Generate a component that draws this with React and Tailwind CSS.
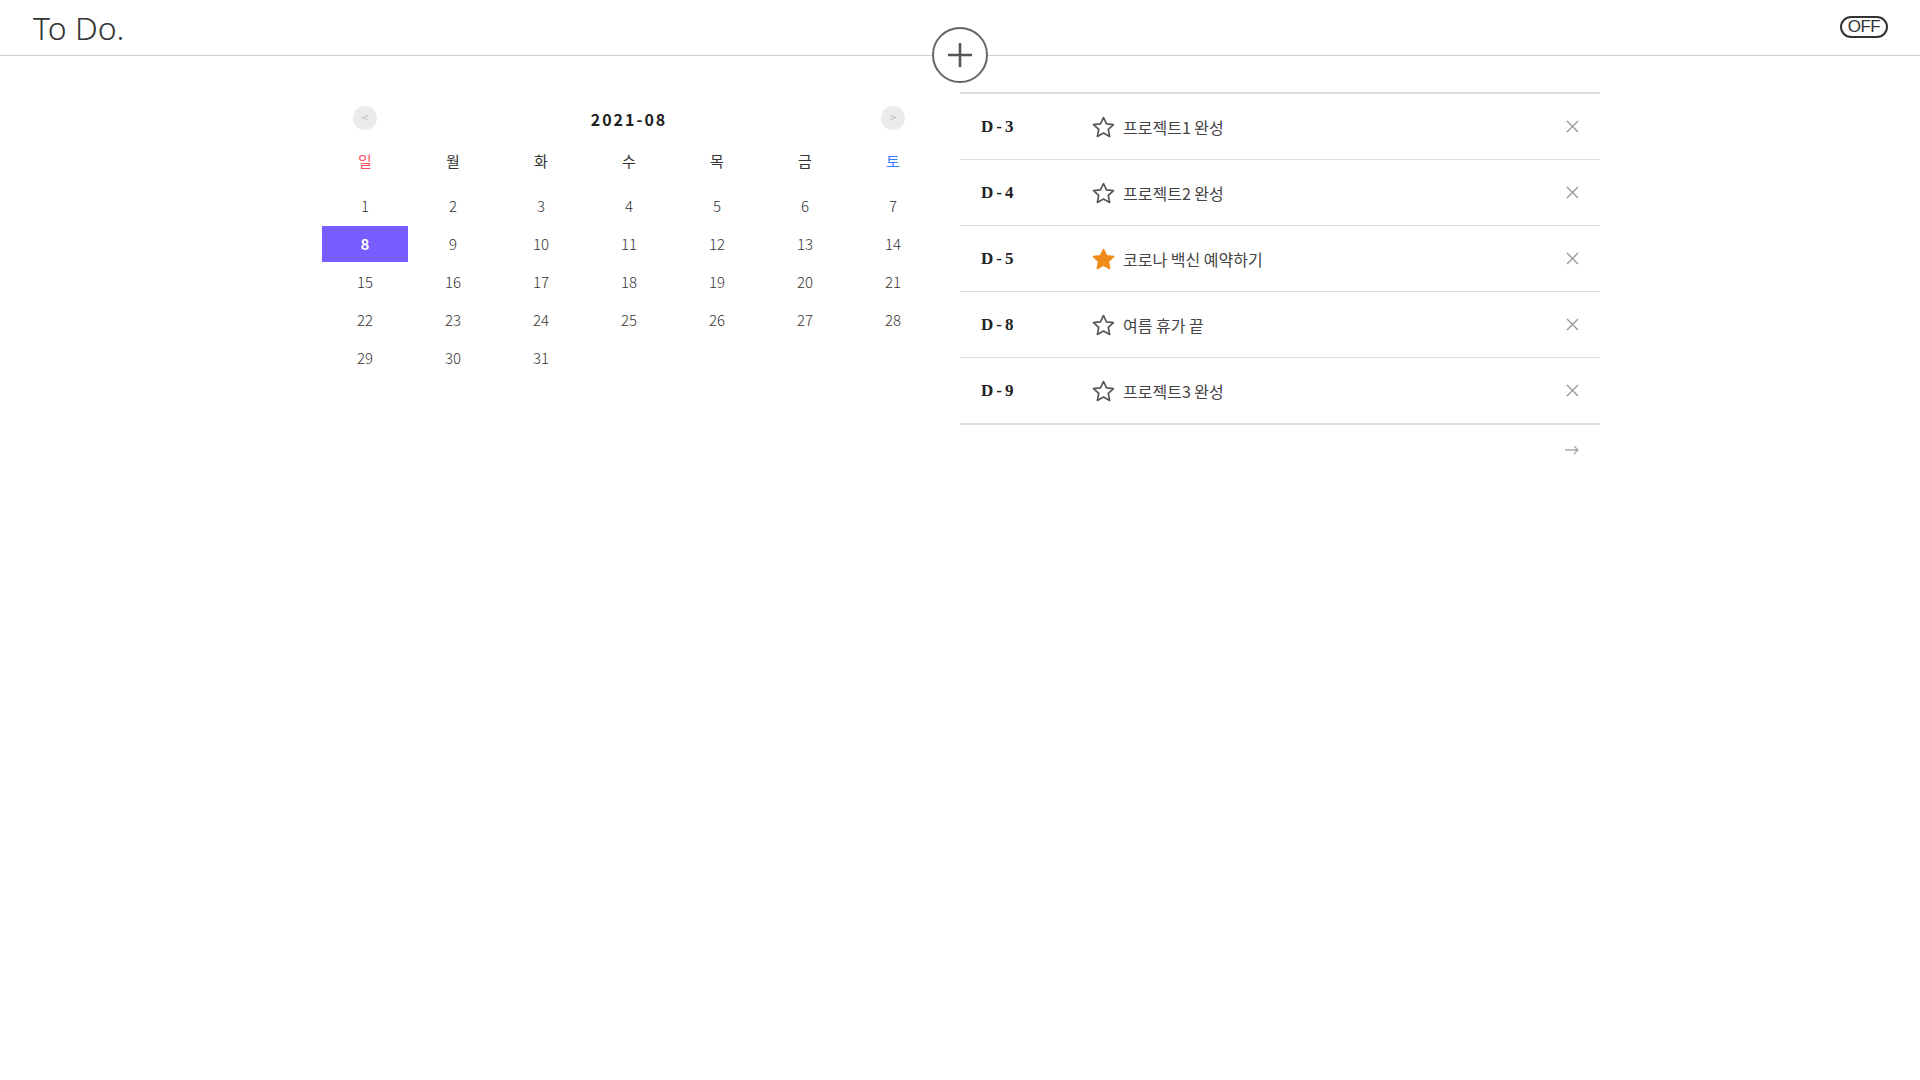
import { useState } from "react";

const KR = { fontFamily: '"Noto Sans CJK KR", "Noto Sans", sans-serif' };

const todos = [
  { d: 3, title: "프로젝트1 완성", star: false },
  { d: 4, title: "프로젝트2 완성", star: false },
  { d: 5, title: "코로나 백신 예약하기", star: true },
  { d: 8, title: "여름 휴가 끝", star: false },
  { d: 9, title: "프로젝트3 완성", star: false },
];

const weekdays = ["일", "월", "화", "수", "목", "금", "토"];

function Star({ filled }) {
  return (
    <svg width="25" height="25" viewBox="0 0 24 24">
      <path
        d="M12 2.4l2.9 6.1 6.7.8-5 4.6 1.3 6.7L12 17.3l-5.9 3.3 1.3-6.7-5-4.6 6.7-.8z"
        fill={filled ? "#f08c1c" : "none"}
        stroke={filled ? "#f08c1c" : "#555"}
        strokeWidth="1.6"
        strokeLinejoin="round"
      />
    </svg>
  );
}

function Calendar() {
  const [selected, setSelected] = useState(8);
  const days = [];
  for (let i = 1; i <= 31; i++) days.push(i);

  return (
    <div className="w-[616px] ml-[1px] pt-[48px]" style={KR}>
      <div className="grid grid-cols-7 h-[24px] items-center">
        <div className="flex justify-center">
          <button className="w-[24px] h-[24px] rounded-full bg-[#ebebeb] text-[#bbb] text-[11px] leading-none flex items-center justify-center">
            &lt;
          </button>
        </div>
        <div className="col-span-5 text-center text-[16px] font-bold tracking-[2px] text-[#222] pt-[3px]">
          2021-08
        </div>
        <div className="flex justify-center">
          <button className="w-[24px] h-[24px] rounded-full bg-[#ebebeb] text-[#bbb] text-[11px] leading-none flex items-center justify-center">
            &gt;
          </button>
        </div>
      </div>

      <div className="grid grid-cols-7 mt-[15px] h-[36px] items-center text-[15px]">
        {weekdays.map((w, i) => (
          <div
            key={w}
            className={
              "text-center " +
              (i === 0 ? "text-[#ff4b5c]" : i === 6 ? "text-[#3c7bff]" : "text-[#333]")
            }
          >
            {w}
          </div>
        ))}
      </div>

      <div className="grid grid-cols-7 auto-rows-[38px] mt-[8px] text-[15px] font-light text-[#333]">
        {days.map((d) => (
          <div key={d} className="p-px">
            <div
              onClick={() => setSelected(d)}
              className={
                "h-full flex items-center justify-center cursor-pointer " +
                (d === selected ? "bg-[#775cff] text-white font-bold" : "")
              }
            >
              {d}
            </div>
          </div>
        ))}
      </div>
    </div>
  );
}

function TodoList() {
  return (
    <div className="w-[640px] pt-[36px]">
      <div className="border-t-2 border-b-2 border-[#dcdcdc]">
        {todos.map((t, i) => (
          <div
            key={t.d}
            className={
              "flex items-center h-[65px] pl-[21px] pr-[21px] " +
              (i < todos.length - 1 ? "border-b border-[#dcdcdc] h-[66px]" : "")
            }
          >
            <div
              className="w-[110px] text-[17px] font-bold tracking-[3px] text-[#222]"
              style={{ fontFamily: '"Liberation Serif", serif' }}
            >
              D-{t.d}
            </div>
            <div className="mt-[2px]">
              <Star filled={t.star} />
            </div>
            <div className="flex-1 ml-[7px] text-[16px] text-[#444]" style={KR}>
              {t.title}
            </div>
            <button className="w-[14px] h-[14px] flex items-center justify-center">
              <svg width="13" height="13" viewBox="0 0 13 13">
                <path d="M1 1l11 11M12 1L1 12" stroke="#999" strokeWidth="1.4" />
              </svg>
            </button>
          </div>
        ))}
      </div>
      <div className="flex justify-end pr-[20px] pt-[20px]">
        <svg width="16" height="10" viewBox="0 0 16 10">
          <path d="M1 5h13M10 1l4 4-4 4" fill="none" stroke="#aaa" strokeWidth="1.4" />
        </svg>
      </div>
    </div>
  );
}

export default function App() {
  return (
    <div className="min-h-screen bg-white">
      <header className="relative h-[56px] border-b border-[#cfcfcf] flex items-center justify-between pl-[33px] pr-[32px]">
        <h1
          className="text-[32px] font-light text-[#333] leading-none"
          style={{ fontFamily: '"Noto Sans", sans-serif' }}
        >
          To Do.
        </h1>
        <button
          className="h-[22px] w-[48px] rounded-full border-2 border-[#333] text-[17px] leading-none tracking-[-0.5px] text-[#333] flex items-center justify-center mb-[2px]"
          style={{ fontFamily: '"Liberation Sans", sans-serif' }}
        >
          OFF
        </button>
        <button className="absolute left-1/2 top-[27px] -translate-x-1/2 w-[56px] h-[56px] rounded-full border-2 border-[#666] bg-white flex items-center justify-center">
          <svg width="26" height="26" viewBox="0 0 26 26">
            <path d="M13 1v24M1 13h24" stroke="#555" strokeWidth="2.6" />
          </svg>
        </button>
      </header>

      <main className="w-[1280px] mx-auto flex">
        <div className="w-[640px]">
          <Calendar />
        </div>
        <TodoList />
      </main>
    </div>
  );
}
